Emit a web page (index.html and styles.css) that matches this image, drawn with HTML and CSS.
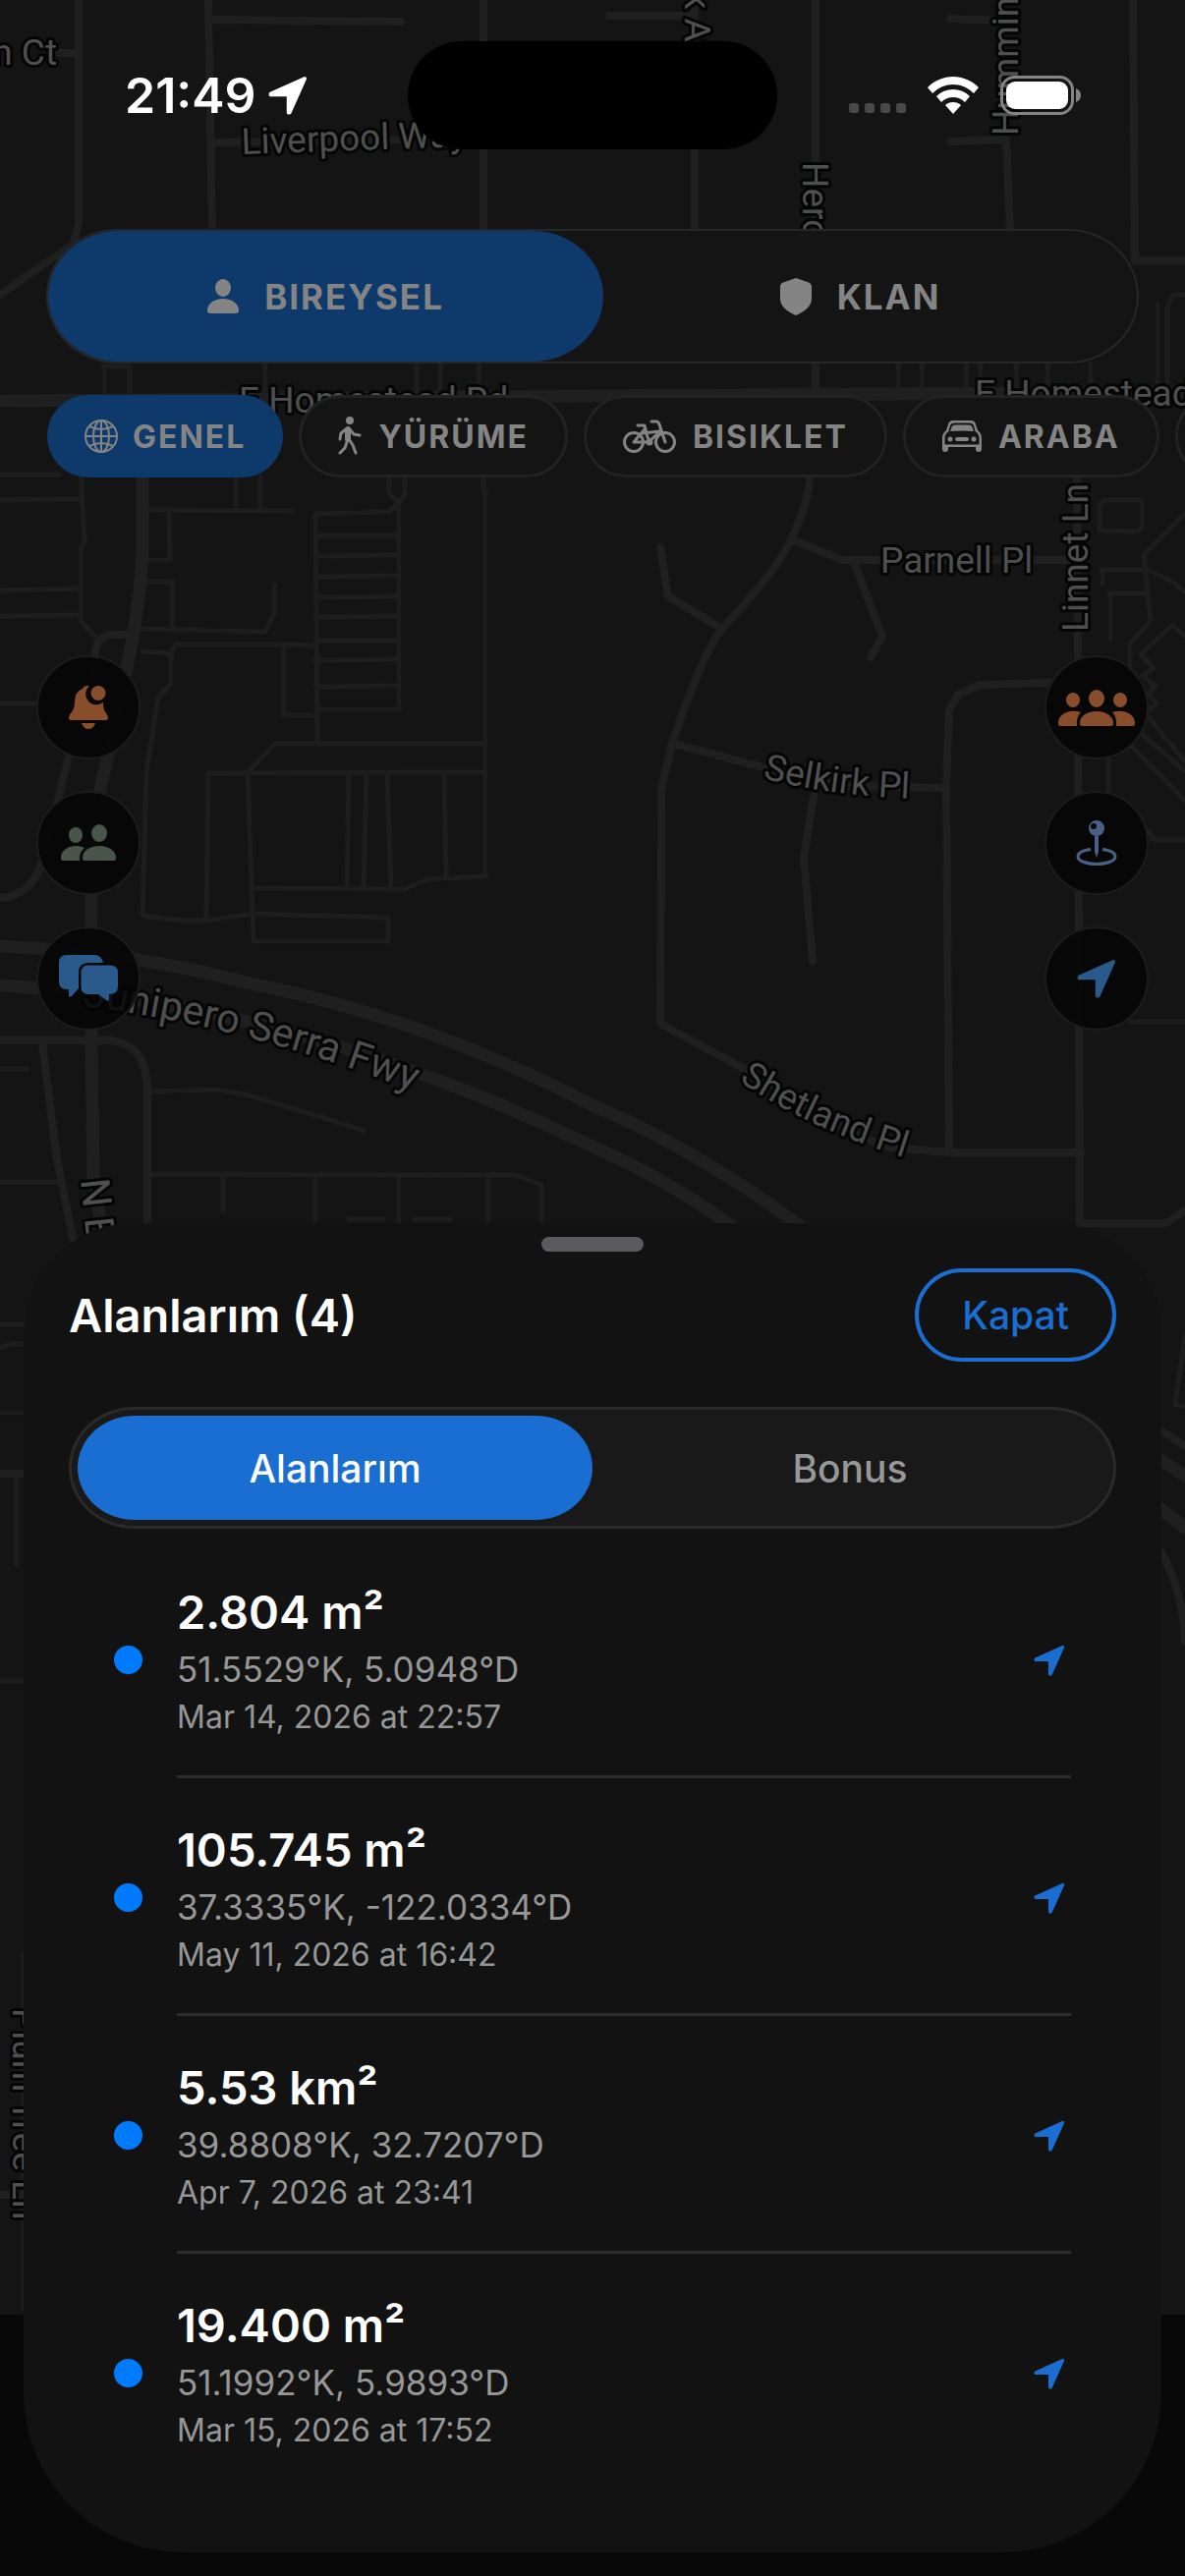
FILE: index.html
```html
<!DOCTYPE html>
<html lang="tr">
<head>
    <meta charset="UTF-8">
    <meta name="viewport" content="width=device-width, initial-scale=1.0">
    <title>Alanlarım</title>
    <link rel="stylesheet" href="styles.css">
</head>
<body>

    <!-- Shared icon -->
    <svg class="sprite" aria-hidden="true">
        <symbol id="arrow" viewBox="0 0 32 32">
            <path d="M29.7 2.3L2 14.8V15.5H16.5V30H17.4Z" fill="currentColor" stroke="currentColor" stroke-width="3" stroke-linejoin="round"/>
        </symbol>
    </svg>

    <div class="screen">

        <!-- Map -->
        <svg class="map" viewBox="0 0 1206 2356" preserveAspectRatio="xMidYMin slice" aria-hidden="true">
            <g class="street thin">
                <path d="M106 403V373H132V403M270 370V403M424 370V403M449 370L447 403M487 370V403M0 483H60M83 485V500M240 485V519M265 485V519M396 485V500M412 485V500M492 485V500"/>
                <path d="M914 370V400M938 370V400M983 370V400M998 370V400M1034 370V400M1066 370V400M1110 370V400M1178 310V400M1206 300H1194L1188 312V400"/>
                <path d="M0 509L82 508M83 500L86 550L82 560V632L97 648M0 601L82 599M0 627L82 626M0 716H40"/>
                <path d="M150 519L298 520M172 519L173 570H150M150 592H175V641M145 640L270 643L279 624V595"/>
                <path d="M145 663L174 665L179 656H280L321 657M174 665V696L161 710L149 785L145 932L185 937H210L258 930L395 934V958H258L252 787"/>
                <path d="M289 656V728H321M323 755L321 523L396 521L406 512V722M396 502L406 512L413 502"/>
                <path d="M321 545H406M321 566L406 565M321 587L406 586M321 608L406 607M321 628L406 627M321 652H406M321 672L406 671M321 699L406 698M321 722H406"/>
                <path d="M253 785L280 757H494M210 935L212 787L494 786M494 500V892L435 895L412 905L258 904M355 787L353 903M373 787L370 903M394 787L398 903M452 787L454 893"/>
                <path d="M150 1111L220 1109L250 1114L330 1138L370 1151M154 1195L525 1196L551 1206V1250M227 1196V1232M321 1196V1250M406 1196V1250M497 1196V1250M0 1203H58M0 1088H27M355 1241H390M422 1241H458"/>
                <path d="M1130 650V604H1167M1122 593V580H1168L1195 593L1206 603M1206 523L1164 565L1171 632L1150 655V680M1119 540V515Q1120 509 1128 509H1158Q1162 509 1162 514V534Q1162 541 1154 541L1119 540M1206 648L1193 636L1161 666L1174 680L1163 688L1176 698L1168 707L1178 716L1165 725L1206 775M1160 745L1206 785M1150 758L1206 815M1128 770V810M1160 836L1175 855H1206M1150 1040H1206"/>
                <path d="M0 1348H30M0 1372L12 1368H30M0 1438H30M17 1500V1593M0 1711H30M24 1990V2350M1206 1360L1196 1430L1206 1431"/>
            </g>
            <g class="street">
                <path d="M80 0V228L75 248L0 300M212 0L216 235M212 20L408 22M60 54H80M492 0V235M218 145L492 141M707 0V235M620 16H705M830 0V400"/>
                <path d="M1153 0L1155 265H1206M967 19L1020 21M967 144L1024 142L1028 235"/>
                <path d="M135 646H115Q98 647 97 665Q95 690 70 770L45 870Q35 912 0 914M43 1062L58 1180L74 1260M0 1059H110Q150 1062 150 1110V1250"/>
                <path d="M824 485Q824 510 805 549Q795 575 735 640Q715 665 684 757L673 803L672 1042L780 1100Q850 1150 905 1168L965 1173H1100"/>
                <path d="M672 557L680 607L735 640M805 549L857 570H1095M869 572L898 648L886 669M686 757L780 782L860 800L963 802M828 810L818 873L827 978"/>
                <path d="M1070 695L997 697L975 707L966 723L963 800L966 1173M1096 490L1099 1245H1187L1206 1232"/>
                <path d="M0 1500H30M0 2234H30M1180 1455L1206 1472M1182 1580Q1204 1620 1206 1670"/>
            </g>
            <g class="street wide">
                <path d="M0 408L603 403L1206 399M145 485V560Q144 610 125 700L105 790Q93 840 93 880V1060L95 1200L105 1260"/>
                <path d="M0 963Q140 970 250 1000Q430 1035 603 1125Q720 1175 830 1260M0 1003Q300 1020 603 1167Q690 1205 760 1260M1175 1482L1206 1502M1175 1531L1206 1555"/>
            </g>
            <g class="labels">
                <text x="58" y="66" text-anchor="end">n Ct</text>
                <text x="246" y="157" transform="rotate(-2 246 157)">Liverpool Way</text>
                <text x="243" y="420">E Homestead Rd</text>
                <text x="992" y="413">E Homestead Rd</text>
                <text transform="translate(697 -42) rotate(90)">ark Ave</text>
                <text transform="translate(1036 138) rotate(-90)">Hummingbird</text>
                <text transform="translate(817 165) rotate(90)">Heron Ave</text>
                <text transform="translate(1107 643) rotate(-90)">Linnet Ln</text>
                <text x="896" y="583">Parnell Pl</text>
                <path id="selkirk" class="guide" d="M776 792Q850 812 960 814"/>
                <text><textPath href="#selkirk">Selkirk Pl</textPath></text>
                <path id="shetland" class="guide" d="M752 1100Q830 1155 960 1190"/>
                <text><textPath href="#shetland">Shetland Pl</textPath></text>
                <path id="junipero" class="guide" d="M84 1024Q260 1045 450 1122"/>
                <text class="highway"><textPath href="#junipero">Junipero Serra Fwy</textPath></text>
                <text class="highway" transform="translate(82 1201) rotate(84)">N Blaney</text>
                <text transform="translate(13 2044) rotate(90)">Plum Tree Ln</text>
            </g>
        </svg>

        <!-- Status bar -->
        <header class="status-bar">
            <div class="status-left">
                <span class="time">21:49</span>
                <svg class="status-arrow"><use href="#arrow"/></svg>
            </div>
            <div class="island"></div>
            <div class="status-right">
                <svg class="dots" viewBox="0 0 58 10" width="58" height="10" fill="#484848"><rect width="10" height="10" rx="3"/><rect x="16" width="10" height="10" rx="3"/><rect x="32" width="10" height="10" rx="3"/><rect x="48" width="10" height="10" rx="3"/></svg>
                <svg viewBox="0 0 52 38" width="52" height="38" fill="#fff">
                    <path d="M26 0C36 0 45 4 52 11L47 17Q38 8 26 8T5 17L0 11C7 4 16 0 26 0Z"/>
                    <path d="M26 13Q36 13 43 20L38 26Q33 21 26 21T14 26L9 20Q16 13 26 13Z"/>
                    <path d="M26 26Q31 26 34 29L26 38L18 29Q21 26 26 26Z"/>
                </svg>
                <svg viewBox="0 0 82 40" width="82" height="40">
                    <rect x="1.5" y="1.5" width="72" height="37" rx="13" fill="none" stroke="#848484" stroke-width="3"/>
                    <rect x="6" y="6" width="63" height="28" rx="9" fill="#fff"/>
                    <path d="M77 13q5 2 5 7t-5 7z" fill="#848484"/>
                </svg>
            </div>
        </header>

        <!-- Mode switch -->
        <div class="mode-switch">
            <button class="mode-button active">
                <svg viewBox="0 0 32 36" width="32" height="36" fill="currentColor"><ellipse cx="16" cy="9" rx="8" ry="9"/><path d="M3 35Q0 35 0 32C0 25 7 20 16 20S32 25 32 32Q32 35 29 35Z"/></svg>
                BIREYSEL
            </button>
            <button class="mode-button">
                <svg viewBox="0 0 32 38" width="32" height="38" fill="currentColor"><path d="M16 0L29 4.500Q32 5.500 32 9V21C32 29 25 34 16 38C7 34 0 29 0 21V9Q0 5.500 3 4.500Z"/></svg>
                KLAN
            </button>
        </div>

        <!-- Activity filters -->
        <nav class="filters">
            <button class="filter active">
                <svg viewBox="0 0 34 34" width="34" height="34" fill="none" stroke="currentColor" stroke-width="2"><circle cx="17" cy="17" r="16"/><ellipse cx="17" cy="17" rx="8" ry="16"/><path d="M17 1V33M1 17H33M5 7Q17 13 29 7M5 27Q17 21 29 27"/></svg>
                GENEL
            </button>
            <button class="filter">
                <svg viewBox="0 0 24 40" width="24" height="40" fill="none" stroke="currentColor" stroke-linecap="round" stroke-linejoin="round"><circle cx="12" cy="4" r="4" fill="currentColor" stroke="none"/><path d="M10 13V23" stroke-width="6"/><path d="M8 13L3 17L2 23M12 13L16 18L22 19" stroke-width="3"/><path d="M11 23L15 29L18 37M9 26L7 32L2 37" stroke-width="3"/></svg>
                YÜRÜME
            </button>
            <button class="filter">
                <svg viewBox="0 0 54 34" width="54" height="34" fill="none" stroke="currentColor" stroke-width="3" stroke-linecap="round" stroke-linejoin="round"><circle cx="11" cy="23" r="9.500"/><circle cx="43" cy="23" r="9.500"/><path d="M11 23H26L38 12M11 23L22 10L27 23M20 14L37 12M15 6H22L24 14M29 2H34Q36 2 37 5L43 23"/><circle cx="27" cy="23" r="2"/></svg>
                BISIKLET
            </button>
            <button class="filter">
                <svg viewBox="0 0 40 32" width="40" height="32" fill="currentColor"><path fill-rule="evenodd" d="M11 0H29Q33 0 34 4L36 10Q40 13 40 18V29Q40 32 37 32Q34 32 34 29V27H6V29Q6 32 3 32Q0 32 0 29V18Q0 13 4 10L6 4Q7 0 11 0ZM12 2.500Q9 2.500 8 5L6.500 11Q2.500 14 2.500 18V24.500H37.500V18Q37.500 14 33.500 11L32 5Q31 2.500 28 2.500Z"/><path d="M13 4.500H27Q30 4.500 30.500 7L32 11Q20 10 8 11L9.500 7Q10 4.500 13 4.500Z"/><circle cx="8" cy="19" r="2.500"/><circle cx="32" cy="19" r="2.500"/><rect x="13" y="17" width="14" height="4" rx="2"/></svg>
                ARABA
            </button>
            <button class="filter" aria-label="Diğer"></button>
        </nav>

        <!-- Floating map buttons -->
        <div class="map-controls">
            <div class="control-column">
                <button class="round-button orange" aria-label="Bildirimler">
                    <svg viewBox="0 0 40 44" width="40" height="44" fill="currentColor"><path d="M21 0.300Q16 -1 14 3Q6 6 6 16Q6 24 2 28Q0 30 0 33Q0 35 2 35H38Q40 35 40 33Q40 30 38 28Q35 25 35 16.800A10.500 10.500 0 0 1 21 0.300Z"/><path d="M13 38H27Q25 44 20 44T13 38Z"/><circle cx="30" cy="7.500" r="7.500"/></svg>
                </button>
                <button class="round-button sage" aria-label="Arkadaşlar">
                    <svg viewBox="0 0 56 38" width="56" height="38" fill="currentColor"><ellipse cx="15" cy="11" rx="7" ry="8"/><path d="M24 24Q18 29 19 37H2Q0 37 0 34C0 24 14 19 24 24Z"/><ellipse cx="39" cy="9" rx="8" ry="9"/><path d="M24 37Q22 37 22 34C22 27 29 22 39 22S56 27 56 34Q56 37 54 37Z"/></svg>
                </button>
                <button class="round-button blue" aria-label="Sohbet">
                    <svg viewBox="0 0 60 48" width="60" height="48" fill="currentColor"><path d="M8 0H37Q43 0 45 8H30Q20 8 20 18V34L13 42Q10 44 10 41V35H8Q0 35 0 27V8Q0 0 8 0Z"/><path d="M30 10.500H52Q60 10.500 60 18V32Q60 40 51 40V45Q51 48 48 46L40 40H30Q22.500 40 22.500 32V18Q22.500 10.500 30 10.500Z"/></svg>
                </button>
            </div>
            <div class="control-column">
                <button class="round-button orange" aria-label="Klan üyeleri">
                    <svg viewBox="0 0 78 37" width="78" height="37" fill="currentColor"><ellipse cx="15" cy="10.500" rx="7" ry="7.500"/><path d="M23 23Q18 28 19 37H2Q0 37 0 34C0 25 11 19 23 23Z"/><ellipse cx="63" cy="10.500" rx="7" ry="7.500"/><path d="M55 23Q60 28 59 37H76Q78 37 78 34C78 25 67 19 55 23Z"/><ellipse cx="39" cy="9" rx="8" ry="9"/><path d="M24 37Q22 37 22 34C22 27 29 22 39 22S56 27 56 34Q56 37 54 37Z"/></svg>
                </button>
                <button class="round-button steel" aria-label="Konum iğnesi">
                    <svg viewBox="0 0 42 46" width="42" height="46" fill="none" stroke="currentColor" stroke-width="3"><path fill="currentColor" stroke="none" fill-rule="evenodd" d="M21 0a8 8 0 1 1 0 16a8 8 0 1 1 0-16ZM18 3a3 3 0 1 0 0 6a3 3 0 1 0 0-6Z"/><path d="M19 16H23V32L21 38L19 32Z" fill="currentColor" stroke="none"/><path d="M15 29.500C7 30.500 2 33 2 37C2 41 10 44.500 21 44.500S40 41 40 37C40 33 35 30.500 27 29.500"/></svg>
                </button>
                <button class="round-button blue" aria-label="Konumum">
                    <svg class="control-arrow"><use href="#arrow"/></svg>
                </button>
            </div>
        </div>

        <!-- Bottom sheet -->
        <main class="sheet">
            <div class="grabber"></div>
            <div class="sheet-header">
                <h1>Alanlarım (4)</h1>
                <button class="close-button">Kapat</button>
            </div>
            <div class="tabs">
                <button class="tab active">Alanlarım</button>
                <button class="tab">Bonus</button>
            </div>
            <ul class="area-list">
                <li class="area">
                    <span class="dot"></span>
                    <div class="area-body">
                        <div class="area-text">
                            <h2>2.804 m²</h2>
                            <p class="coords">51.5529°K, 5.0948°D</p>
                            <p class="date">Mar 14, 2026 at 22:57</p>
                        </div>
                        <button class="go-button" aria-label="Haritada göster"><svg><use href="#arrow"/></svg></button>
                    </div>
                </li>
                <li class="area">
                    <span class="dot"></span>
                    <div class="area-body">
                        <div class="area-text">
                            <h2>105.745 m²</h2>
                            <p class="coords">37.3335°K, -122.0334°D</p>
                            <p class="date">May 11, 2026 at 16:42</p>
                        </div>
                        <button class="go-button" aria-label="Haritada göster"><svg><use href="#arrow"/></svg></button>
                    </div>
                </li>
                <li class="area">
                    <span class="dot"></span>
                    <div class="area-body">
                        <div class="area-text">
                            <h2>5.53 km²</h2>
                            <p class="coords">39.8808°K, 32.7207°D</p>
                            <p class="date">Apr 7, 2026 at 23:41</p>
                        </div>
                        <button class="go-button" aria-label="Haritada göster"><svg><use href="#arrow"/></svg></button>
                    </div>
                </li>
                <li class="area">
                    <span class="dot"></span>
                    <div class="area-body">
                        <div class="area-text">
                            <h2>19.400 m²</h2>
                            <p class="coords">51.1992°K, 5.9893°D</p>
                            <p class="date">Mar 15, 2026 at 17:52</p>
                        </div>
                        <button class="go-button" aria-label="Haritada göster"><svg><use href="#arrow"/></svg></button>
                    </div>
                </li>
            </ul>
        </main>
    </div>

</body>
</html>
```
FILE: styles.css
```css
* {
    box-sizing: border-box;
}

body {
    margin: 0;
    background-color: #080808;
    color: #ffffff;
    font-family: Inter, "Liberation Sans", sans-serif;
}

button {
    margin: 0;
    padding: 0;
    border: none;
    background: none;
    color: inherit;
    font-family: inherit;
    cursor: pointer;
}

svg {
    display: block;
    flex: none;
}

.sprite {
    position: absolute;
    width: 0;
    height: 0;
}

.screen {
    position: relative;
    min-height: 100vh;
    overflow: hidden;
}

/* Map lies behind everything else */
.map {
    position: absolute;
    top: 0;
    left: 0;
    z-index: -1;
    width: 100%;
    background-color: #141414;
}

.street {
    fill: none;
    stroke: #1f1f1f;
    stroke-width: 8;
    stroke-linecap: round;
    stroke-linejoin: round;
}

.street.thin {
    stroke-width: 5;
    stroke: #1d1d1d;
}

.street.wide {
    stroke-width: 13;
}

.guide {
    fill: none;
}

.labels text {
    font-family: Roboto, "Liberation Sans", sans-serif;
    font-size: 37px;
    fill: #4e504f;
    stroke: #050505;
    stroke-width: 6px;
    stroke-linejoin: round;
    paint-order: stroke;
}

.labels .highway {
    font-size: 41px;
}

/* Status bar */
.status-bar {
    display: grid;
    grid-template-columns: 1fr 376px 1fr;
    align-items: center;
    padding: 42px 0 81px;
}

.status-left,
.status-right {
    display: flex;
    align-items: center;
}

.status-left {
    gap: 12px;
    padding-left: 127px;
}

.time {
    font-size: 50px;
    font-weight: 600;
    line-height: 60px;
}

.status-arrow {
    width: 40px;
    height: 40px;
}

.island {
    height: 110px;
    border-radius: 55px;
    background-color: #000000;
}

.status-right {
    justify-content: flex-end;
    gap: 22px;
    padding-right: 106px;
}

.dots {
    align-self: flex-end;
    margin-bottom: 2px;
}

/* Mode switch */
.mode-switch {
    display: flex;
    height: 137px;
    margin: 0 47px;
    border: 2px solid #272727;
    border-radius: 72px / 50%;
    background-color: #141414;
}

.mode-button {
    display: flex;
    flex: 1;
    align-items: center;
    justify-content: center;
    gap: 26px;
    padding-right: 20px;
    color: #848484;
    font-size: 35px;
    font-weight: 700;
    letter-spacing: 2px;
}

.mode-button.active {
    flex: none;
    width: 51%;
    padding-right: 0;
    border-radius: 72px / 50%;
    background-color: #0e396b;
}

/* Filters */
.filters {
    display: flex;
    align-items: center;
    gap: 16px;
    height: 88px;
    margin-top: 30px;
    padding-left: 48px;
    overflow: hidden;
}

.filter {
    display: flex;
    flex: none;
    align-items: center;
    gap: 17px;
    min-width: 120px;
    height: 84px;
    padding: 0 37px;
    border: 3px solid #222222;
    border-radius: 42px;
    background-color: #141414;
    color: #848484;
    font-size: 32px;
    font-weight: 700;
    letter-spacing: 2px;
}

.filter.active {
    gap: 15px;
    padding: 0 35px;
    border-color: #0e396b;
    background-color: #0e396b;
}

/* Floating buttons */
.map-controls {
    display: flex;
    justify-content: space-between;
    margin: 179px 37px 196px;
}

.control-column {
    display: flex;
    flex-direction: column;
    gap: 32px;
}

.round-button {
    display: flex;
    align-items: center;
    justify-content: center;
    width: 106px;
    height: 106px;
    border: 2px solid #1c1c1c;
    border-radius: 50%;
    background-color: rgba(5, 5, 5, 0.85);
}

.orange {
    color: #884e2c;
}

.sage {
    color: #49544b;
}

.blue {
    color: #2a5a8c;
}

.steel {
    color: #4a6186;
}

.control-arrow {
    width: 40px;
    height: 40px;
}

/* Bottom sheet */
.sheet {
    margin: 0 24px 24px;
    padding: 14px 46px 62px;
    border-radius: 112px 112px 162px 162px;
    background-color: #121212;
}

.grabber {
    width: 104px;
    height: 15px;
    margin: 0 auto 17px;
    border-radius: 8px;
    background-color: #5b5a5f;
}

.sheet-header {
    display: flex;
    align-items: center;
    justify-content: space-between;
}

.sheet-header h1 {
    margin: 0;
    font-size: 47px;
    font-weight: 600;
    line-height: 60px;
}

.close-button {
    height: 95px;
    padding: 0 44px;
    border: 4px solid #1b6ed1;
    border-radius: 48px;
    color: #1b6ed1;
    font-size: 39px;
    font-weight: 500;
}

.tabs {
    display: flex;
    height: 124px;
    margin-top: 46px;
    padding: 6px;
    border: 3px solid #2a2a2a;
    border-radius: 66px / 50%;
    background-color: #191919;
}

.tab {
    flex: 1;
    border-radius: 58px / 50%;
    color: #989898;
    font-size: 39px;
    font-weight: 500;
}

.tab.active {
    background-color: #1b6ed1;
    color: #ffffff;
}

/* Area list */
.area-list {
    margin: 12px 0 0;
    padding: 0 46px;
    list-style: none;
}

.area {
    display: flex;
    align-items: center;
    gap: 35px;
}

.dot {
    width: 29px;
    height: 29px;
    border-radius: 50%;
    background-color: #007aff;
}

.area-body {
    display: flex;
    flex: 1;
    align-items: center;
    justify-content: space-between;
    height: 242px;
    padding: 4px 6px 0 0;
    border-bottom: 3px solid #2d2d2d;
}

.area:last-child .area-body {
    border-bottom-color: transparent;
}

.area-text h2 {
    margin: 0;
    font-size: 47px;
    font-weight: 600;
    line-height: 60px;
}

.area-text p {
    margin: 0;
    color: #979797;
}

.area-text .coords {
    font-size: 35px;
    line-height: 56px;
}

.area-text .date {
    font-size: 32px;
    line-height: 41px;
}

.go-button {
    color: #1b6ed1;
}

.go-button svg {
    width: 32px;
    height: 32px;
}
```
